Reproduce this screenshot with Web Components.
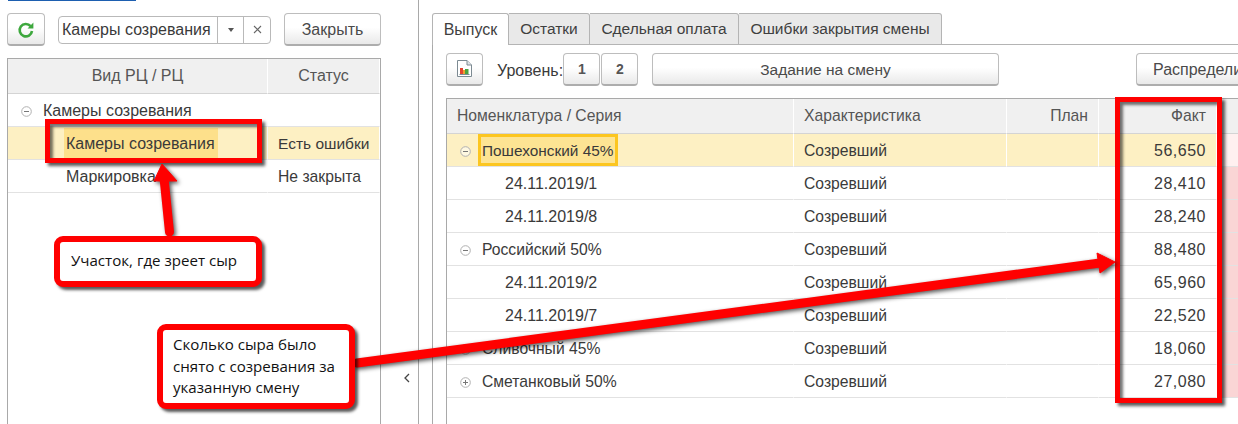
<!DOCTYPE html>
<html lang="ru">
<head>
<meta charset="utf-8">
<title>Закрытие смены</title>
<style>
  html, body { margin: 0; height: 424px; overflow: hidden; background: #fff; }
  body { font: 16px "Liberation Sans", Arial, sans-serif; color: #3a3a3a; position: relative; }
</style>
</head>
<body>
<shift-screen>
  <left-pane slot="left">
    <ui-button slot="tools" style="--w:38px"><refresh-icon></refresh-icon></ui-button>
    <ui-combo slot="tools">Камеры созревания</ui-combo>
    <ui-button slot="tools" style="--w:97px">Закрыть</ui-button>
    <data-grid style="--cols:260px 112px; --right-border:1px solid #a9a9a9">
      <grid-row header>
        <grid-cell center style="--fs:16px">Вид РЦ / РЦ</grid-cell>
        <grid-cell center style="--fs:16px">Статус</grid-cell>
      </grid-row>
      <grid-row>
        <grid-cell style="--pad:13px; --fs:16px"><tree-toggle></tree-toggle>Камеры созревания</grid-cell>
        <grid-cell></grid-cell>
      </grid-row>
      <grid-row selected>
        <grid-cell style="--pad:56px; --fs:16px"><cell-mark>Камеры созревания</cell-mark></grid-cell>
        <grid-cell style="--fs:15.5px">Есть ошибки</grid-cell>
      </grid-row>
      <grid-row>
        <grid-cell style="--pad:58px; --fs:16px">Маркировка</grid-cell>
        <grid-cell>Не закрыта</grid-cell>
      </grid-row>
    </data-grid>
  </left-pane>

  <right-pane slot="right">
    <tab-item slot="tabs" active style="--w:77px">Выпуск</tab-item>
    <tab-item slot="tabs" style="--w:81px">Остатки</tab-item>
    <tab-item slot="tabs" style="--w:149px">Сдельная оплата</tab-item>
    <tab-item slot="tabs" style="--w:203px">Ошибки закрытия смены</tab-item>

    <ui-button slot="tools" style="--w:37px"><report-icon></report-icon></ui-button>
    <level-label slot="tools">Уровень:</level-label>
    <ui-button slot="tools" bold style="--w:37px">1</ui-button>
    <ui-button slot="tools" bold style="--w:37px; --ml:1px">2</ui-button>
    <ui-button slot="tools" style="--w:347px; --ml:14px; --fs:15.5px">Задание на смену</ui-button>
    <ui-button slot="tools" style="--w:190px; --ml:137px; --pl:16px; --just:flex-start">Распределить</ui-button>

    <data-grid style="--cols:347px 213px 92px 118px 60px">
      <grid-row header>
        <grid-cell>Номенклатура / Серия</grid-cell>
        <grid-cell>Характеристика</grid-cell>
        <grid-cell end>План</grid-cell>
        <grid-cell end>Факт</grid-cell>
        <grid-cell></grid-cell>
      </grid-row>
      <output-row selected name="Пошехонский 45%" toggle="minus" focus fact="56,650"></output-row>
      <output-row name="24.11.2019/1" fact="28,410"></output-row>
      <output-row name="24.11.2019/8" fact="28,240"></output-row>
      <output-row name="Российский 50%" toggle="minus" fact="88,480"></output-row>
      <output-row name="24.11.2019/2" fact="65,960"></output-row>
      <output-row name="24.11.2019/7" fact="22,520"></output-row>
      <output-row name="Сливочный 45%" toggle="plus" fact="18,060"></output-row>
      <output-row name="Сметанковый 50%" toggle="plus" fact="27,080"></output-row>
    </data-grid>
  </right-pane>
</shift-screen>

<red-frame x="45" y="119" w="217" h="44"></red-frame>
<red-frame x="1115" y="97" w="107" h="306"></red-frame>
<red-arrows></red-arrows>
<note-box x="54" y="236" w="208" h="51" style="--pl:11px; --pb:2px">Участок, где зреет сыр</note-box>
<note-box x="157" y="324" w="198" h="85">Сколько сыра было<br>снято с созревания за<br>указанную смену</note-box>

<script>
class ShiftScreen extends HTMLElement {
  connectedCallback() {
    this.attachShadow({ mode: 'open' }).innerHTML = `
      <style>
        :host { display: flex; height: 424px; width: 1238px; overflow: hidden; }
        .split {
          width: 38px; flex: none; box-sizing: border-box;
          border-right: 1px solid #a9a9a9;
          display: flex; align-items: flex-end; justify-content: flex-end;
          padding: 0 7px 41px 0;
        }
        .gap { width: 13px; flex: none; }
      </style>
      <slot name="left"></slot>
      <div class="split">
        <svg width="8" height="10" viewBox="0 0 8 10"><path d="M6 1 2 5l4 4" fill="none" stroke="#444" stroke-width="1.3"/></svg>
      </div>
      <div class="gap"></div>
      <slot name="right"></slot>
    `;
  }
}

class LeftPane extends HTMLElement {
  connectedCallback() {
    this.attachShadow({ mode: 'open' }).innerHTML = `
      <style>
        :host { display: flex; flex-direction: column; width: 381px; flex: none; box-sizing: border-box; padding-left: 7px; }
        .bar { height: 1px; width: 128px; margin: 0 0 12px 1px; background: #1d5fb0; }
        .tools { display: flex; align-items: center; justify-content: space-between; margin-bottom: 12px; }
      </style>
      <div class="bar"></div>
      <div class="tools"><slot name="tools"></slot></div>
      <slot></slot>
    `;
  }
}

class RightPane extends HTMLElement {
  connectedCallback() {
    this.attachShadow({ mode: 'open' }).innerHTML = `
      <style>
        :host { display: flex; flex-direction: column; flex: 1; min-width: 0; padding-top: 13px; }
        .tabs { display: flex; height: 31px; flex: none; border-bottom: 1px solid #b4b4b4; box-sizing: content-box; }
        .body {
          flex: 1; min-height: 0; display: flex; flex-direction: column;
          border-left: 1px solid #a9a9a9; padding: 8px 0 0 13px;
        }
        .tools { display: flex; align-items: center; margin-bottom: 12px; white-space: nowrap; }
      </style>
      <div class="tabs"><slot name="tabs"></slot></div>
      <div class="body">
        <div class="tools"><slot name="tools"></slot></div>
        <slot></slot>
      </div>
    `;
  }
}

class TabItem extends HTMLElement {
  connectedCallback() {
    this.attachShadow({ mode: 'open' }).innerHTML = `
      <style>
        :host {
          display: flex; align-items: center; justify-content: center; flex: none;
          box-sizing: border-box; width: var(--w); height: 32px; font-size: 15.5px;
          background: #e9e9e9; color: #3f3f3f; white-space: nowrap;
          border: 1px solid #b4b4b4; border-left: 0; border-radius: 0 3px 0 0;
        }
        :host([active]) {
          background: #fff; border-left: 1px solid #b4b4b4; border-bottom: 0;
          border-radius: 3px 3px 0 0; font-size: 16px;
        }
      </style>
      <slot></slot>
    `;
  }
}

class UiButton extends HTMLElement {
  connectedCallback() {
    this.attachShadow({ mode: 'open' }).innerHTML = `
      <style>
        :host {
          display: flex; align-items: center; justify-content: var(--just, center); flex: none;
          box-sizing: border-box; width: var(--w); height: 33px; margin-left: var(--ml, 0);
          padding: 2px 0 0 var(--pl, 0); color: #4a4a4a; font-size: var(--fs, 16px);
          border: 1px solid #bdbdbd; border-bottom: 2px solid #adadad; border-radius: 4px;
          background: linear-gradient(#fff 45%, #e9e9e9);
        }
        :host([bold]) { font: bold 14px "Liberation Sans", Arial, sans-serif; color: #555; padding: 0 0 0 1px; }
      </style>
      <slot></slot>
    `;
  }
}

class UiCombo extends HTMLElement {
  connectedCallback() {
    this.attachShadow({ mode: 'open' }).innerHTML = `
      <style>
        :host {
          display: flex; align-items: stretch; box-sizing: border-box; width: 213px; height: 28px;
          border: 1px solid #b9b9b9; border-radius: 4px; background: #fff;
        }
        .text { flex: 1; display: flex; align-items: center; padding: 1px 0 0 3px; white-space: nowrap; }
        .btn { width: 25px; display: flex; align-items: center; justify-content: center; border-left: 1px solid #b9b9b9; }
        .btn + .btn { width: 26px; }
        .caret { border: 3.5px solid transparent; border-top: 4px solid #555; border-bottom: 0; }
      </style>
      <div class="text"><slot></slot></div>
      <div class="btn"><span class="caret"></span></div>
      <div class="btn">
        <svg width="9" height="9" viewBox="0 0 9 9"><path d="M1 1l7 7M8 1 1 8" stroke="#666" stroke-width="1.1"/></svg>
      </div>
    `;
  }
}

class LevelLabel extends HTMLElement {
  connectedCallback() {
    this.attachShadow({ mode: 'open' }).innerHTML = `
      <style>:host { display: block; margin-left: 14px; width: 66px; flex: none; white-space: nowrap; padding-top: 3px; }</style>
      <slot></slot>
    `;
  }
}

class DataGrid extends HTMLElement {
  connectedCallback() {
    this.attachShadow({ mode: 'open' }).innerHTML = `
      <style>
        :host {
          display: block; flex: 1; min-height: 0; box-sizing: border-box;
          border: 1px solid #a9a9a9; border-width: 1px 0 0 1px;
          border-right: var(--right-border, 0);
        }
      </style>
      <slot></slot>
    `;
  }
}

class GridRow extends HTMLElement {
  connectedCallback() {
    this.attachShadow({ mode: 'open' }).innerHTML = `
      <style>
        :host {
          display: grid; grid-template-columns: var(--cols); height: 33px;
          --cell-bg: #fff; --cell-line: #e2e2e2; --cell-sep: transparent; --pink: #fad5d5; --cell-top: 2px;
        }
        :host([header]) {
          height: 35px; color: #555; --cell-bg: #f0f0f0; --cell-line: #d4d4d4; --cell-sep: #fff; --pink: #f0f0f0; --cell-top: 0;
        }
        :host([selected]) { --cell-bg: #fdf0c3; --cell-sep: #fff; --pink: #fff0f0; }
      </style>
      <slot></slot>
    `;
  }
}

class GridCell extends HTMLElement {
  connectedCallback() {
    this.attachShadow({ mode: 'open' }).innerHTML = `
      <style>
        :host {
          display: flex; align-items: center; box-sizing: border-box; min-width: 0;
          padding: var(--cell-top) 10px 0 var(--pad, 10px); white-space: nowrap;
          font-size: var(--fs, 15.7px);
          background: var(--cell-bg);
          border-bottom: 1px solid var(--cell-line);
          border-right: 1px solid var(--cell-sep);
        }
        :host([center]) { justify-content: center; }
        :host([end]) { justify-content: flex-end; }
        :host([num]) { font-size: 16px; letter-spacing: .5px; }
        :host([pink]) { background: var(--pink); border-right: 0; }
      </style>
      <slot></slot>
    `;
  }
}

class CellMark extends HTMLElement {
  connectedCallback() {
    this.attachShadow({ mode: 'open' }).innerHTML = `
      <style>
        :host {
          display: flex; align-items: center; align-self: stretch; box-sizing: border-box;
          padding: 0 3px 0 2px; margin-top: -1px; background: #fde08b;
        }
        :host([focus]) {
          margin: -2px 0 0 -4px; padding: 2px 2px 0 1px; font-size: 15.4px;
          border: 3px solid #fcc620; background: #fde493;
        }
      </style>
      <slot></slot>
    `;
  }
}

class TreeToggle extends HTMLElement {
  connectedCallback() {
    const plus = this.getAttribute('kind') === 'plus';
    this.attachShadow({ mode: 'open' }).innerHTML = `
      <style>:host { display: block; flex: none; width: 11px; height: 11px; margin-right: 11px; }</style>
      <svg width="11" height="11" viewBox="0 0 11 11" style="display:block">
        <circle cx="5.5" cy="5.5" r="4.8" fill="#fff" fill-opacity=".5" stroke="#b0b0b0"/>
        <path d="M3 5.5h5${plus ? 'M5.5 3v5' : ''}" stroke="#777"/>
      </svg>
    `;
  }
}

class OutputRow extends HTMLElement {
  connectedCallback() {
    const name = this.getAttribute('name');
    const toggle = this.getAttribute('toggle');
    const focus = this.hasAttribute('focus');
    const selected = this.hasAttribute('selected');
    const label = focus ? `<cell-mark focus>${name}</cell-mark>` : name;
    const lead = toggle
      ? `<grid-cell style="--pad:13px"><tree-toggle kind="${toggle}"></tree-toggle>${label}</grid-cell>`
      : `<grid-cell style="--pad:58px; --fs:16px">${label}</grid-cell>`;
    this.attachShadow({ mode: 'open' }).innerHTML = `
      <style>:host { display: block; }</style>
      <grid-row ${selected ? 'selected' : ''}>
        ${lead}
        <grid-cell>Созревший</grid-cell>
        <grid-cell></grid-cell>
        <grid-cell end num>${this.getAttribute('fact')}</grid-cell>
        <grid-cell pink></grid-cell>
      </grid-row>
    `;
  }
}

class RefreshIcon extends HTMLElement {
  connectedCallback() {
    this.attachShadow({ mode: 'open' }).innerHTML = `
      <style>:host { display: block; width: 18px; height: 18px; margin-top: -1px; }</style>
      <svg width="18" height="18" viewBox="0 0 18 18" style="display:block">
        <path d="M13.6 5.2A6.2 6.2 0 1 0 15 10" fill="none" stroke="#3ea83e" stroke-width="2.6"/>
        <path d="M10.6 7.4 16.4 7.4 16.4 1.6z" fill="#3ea83e"/>
      </svg>
    `;
  }
}

class ReportIcon extends HTMLElement {
  connectedCallback() {
    this.attachShadow({ mode: 'open' }).innerHTML = `
      <style>:host { display: block; width: 15px; height: 17px; margin-top: -3px; }</style>
      <svg width="15" height="17" viewBox="0 0 15 17" style="display:block">
        <path d="M.5.5h9.5l4.500 4.500v11.500H.5z" fill="#fff" stroke="#7c8a92"/>
        <path d="M10 .5v4.500h4.500" fill="#dfe4e7" stroke="#7c8a92"/>
        <rect x="3" y="8" width="3" height="6" fill="#e2452f"/>
        <rect x="6" y="10" width="2" height="4" fill="#f0a030"/>
        <rect x="8" y="9" width="3.500" height="5" fill="#4aa23f"/>
        <path d="M2.500 14.500h10" stroke="#7c8a92"/>
      </svg>
    `;
  }
}

// annotation layer: these sit over the screen at free coordinates
class Placed extends HTMLElement {
  place() {
    this.style.left = `${this.getAttribute('x')}px`;
    this.style.top = `${this.getAttribute('y')}px`;
    this.style.width = `${this.getAttribute('w')}px`;
    this.style.height = `${this.getAttribute('h')}px`;
  }
}

class RedFrame extends Placed {
  connectedCallback() {
    this.place();
    this.attachShadow({ mode: 'open' }).innerHTML = `
      <style>
        :host {
          position: absolute; box-sizing: border-box; border: 5px solid #f00;
          box-shadow: 3px 3px 3px rgba(0,0,0,.65), inset 3px 3px 3px rgba(0,0,0,.55);
        }
      </style>
    `;
  }
}

class NoteBox extends Placed {
  connectedCallback() {
    this.place();
    this.attachShadow({ mode: 'open' }).innerHTML = `
      <style>
        :host {
          position: absolute; box-sizing: border-box; display: flex; align-items: center;
          padding: 0 8px var(--pb, 0) var(--pl, 10px); background: #fff; color: #111;
          font: 15.1px/21.500px "Open Sans", sans-serif; white-space: nowrap;
          border: 6px solid #f00; border-radius: 9px;
          box-shadow: 3px 3px 3px rgba(0,0,0,.65);
        }
      </style>
      <div><slot></slot></div>
    `;
  }
}

class RedArrows extends HTMLElement {
  connectedCallback() {
    this.attachShadow({ mode: 'open' }).innerHTML = `
      <style>
        :host { position: absolute; left: 0; top: 0; width: 1238px; height: 424px; pointer-events: none; }
        svg { display: block; filter: drop-shadow(2px 2px 2px rgba(0,0,0,.65)); }
      </style>
      <svg width="1238" height="424" viewBox="0 0 1238 424">
        <path d="M169.500 232 164 178" stroke="#f00" stroke-width="9" stroke-linecap="round" fill="none"/>
        <path d="M162 164 177 181 154 181z" fill="#f00" stroke="#f00" stroke-linejoin="round"/>
        <path d="M357 363 1100 263" stroke="#f00" stroke-width="9" stroke-linecap="round" fill="none"/>
        <path d="M1115 262 1097 253 1100 273z" fill="#f00" stroke="#f00" stroke-linejoin="round"/>
      </svg>
    `;
  }
}

customElements.define('shift-screen', ShiftScreen);
customElements.define('left-pane', LeftPane);
customElements.define('right-pane', RightPane);
customElements.define('tab-item', TabItem);
customElements.define('ui-button', UiButton);
customElements.define('ui-combo', UiCombo);
customElements.define('level-label', LevelLabel);
customElements.define('data-grid', DataGrid);
customElements.define('grid-row', GridRow);
customElements.define('grid-cell', GridCell);
customElements.define('cell-mark', CellMark);
customElements.define('tree-toggle', TreeToggle);
customElements.define('output-row', OutputRow);
customElements.define('refresh-icon', RefreshIcon);
customElements.define('report-icon', ReportIcon);
customElements.define('red-frame', RedFrame);
customElements.define('note-box', NoteBox);
customElements.define('red-arrows', RedArrows);
</script>
</body>
</html>
